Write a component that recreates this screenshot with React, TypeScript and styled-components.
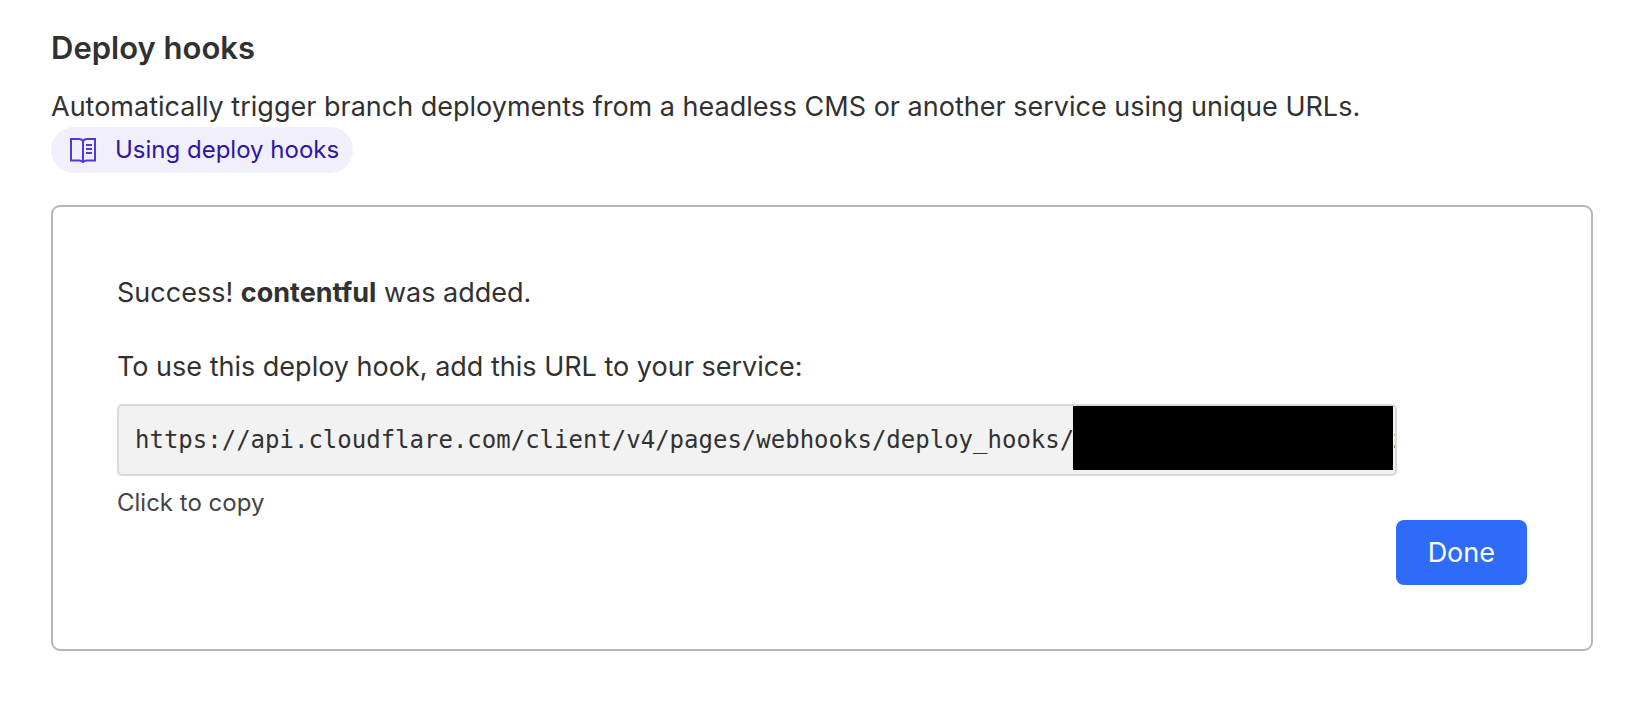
import React from "react";
import styled, { createGlobalStyle } from "styled-components";

const Global = createGlobalStyle`
  * { box-sizing: border-box; }
  body {
    margin: 0; background: #fff; color: #313131;
    font-family: Inter, "Liberation Sans", sans-serif; font-size: 27px; line-height: 40px;
  }
`;
const Page = styled.main`padding: 24px 41px 48px 51px;`;
const Title = styled.h2`margin: 0; font-size: 31px; line-height: 48px; font-weight: 600;`;
const Intro = styled.p`margin: 15px 0 0;`;
const DocLink = styled.a`
  display: flex; align-items: center; gap: 19px; width: fit-content; height: 46px; padding: 0 14px 0 19px;
  border-radius: 23px; background: #f2effc; color: #2c16a3; font-size: 24px; text-decoration: none;
`;
const BookIcon = styled.svg`width: 26px; height: 26px; flex: none; color: #4c3bd6;`;
const Card = styled.section`margin-top: 32px; padding: 66px 64px 64px; border: 2px solid #b6b6b6; border-radius: 9px;`;
const Text = styled.p`margin: 0 0 34px;`;
const Label = styled.label`display: block;`;
const Field = styled.div`position: relative; margin-top: 17px; margin-right: 130px;`;
const UrlInput = styled.input`
  display: block; width: 100%; height: 72px; padding: 0 0 0 16px; border: 2px solid #d9d9d9; border-radius: 5px;
  background: #f2f2f2; color: #313131; font-family: "DejaVu Sans Mono", monospace; font-size: 24px; outline: none;
`;
const Redaction = styled.span`position: absolute; top: 2px; right: 4px; width: 320px; height: 64px; background: #000;`;
const Hint = styled.p`margin: 9px 0 0; color: #444; font-size: 24px; line-height: 35px;`;
const Actions = styled.div`display: flex; justify-content: flex-end;`;
const Done = styled.button`
  height: 65px; padding: 0 32px; border: 0; border-radius: 8px; background: #2f6bf9; color: #fff; font: inherit;
  cursor: pointer;
`;

const hookUrl = "https://api.cloudflare.com/client/v4/pages/webhooks/deploy_hooks/c" + " ".repeat(21) + "z";

export default function App() {
  return (
    <Page>
      <Global />
      <Title>Deploy hooks</Title>
      <Intro>Automatically trigger branch deployments from a headless CMS or another service using unique URLs.</Intro>
      <DocLink href="#docs">
        <BookIcon viewBox="0 0 26 26" fill="none" stroke="currentColor" strokeWidth="2" aria-hidden="true">
          <path d="M13 4C12 2.500 10.500 2 9 2H1V23.500H9C11 23.500 12.500 24 13 25.500C13.500 24 15 23.500 17 23.500H25V2H17C15.500 2 14 2.500 13 4V25.500" />
          <path d="M16 8H22M16 12H22M16 16H22" />
        </BookIcon>
        Using deploy hooks
      </DocLink>
      <Card>
        <Text>Success! <strong>contentful</strong> was added.</Text>
        <Label htmlFor="url">To use this deploy hook, add this URL to your service:</Label>
        <Field>
          <UrlInput id="url" readOnly value={hookUrl} />
          <Redaction />
        </Field>
        <Hint>Click to copy</Hint>
        <Actions><Done type="button">Done</Done></Actions>
      </Card>
    </Page>
  );
}
